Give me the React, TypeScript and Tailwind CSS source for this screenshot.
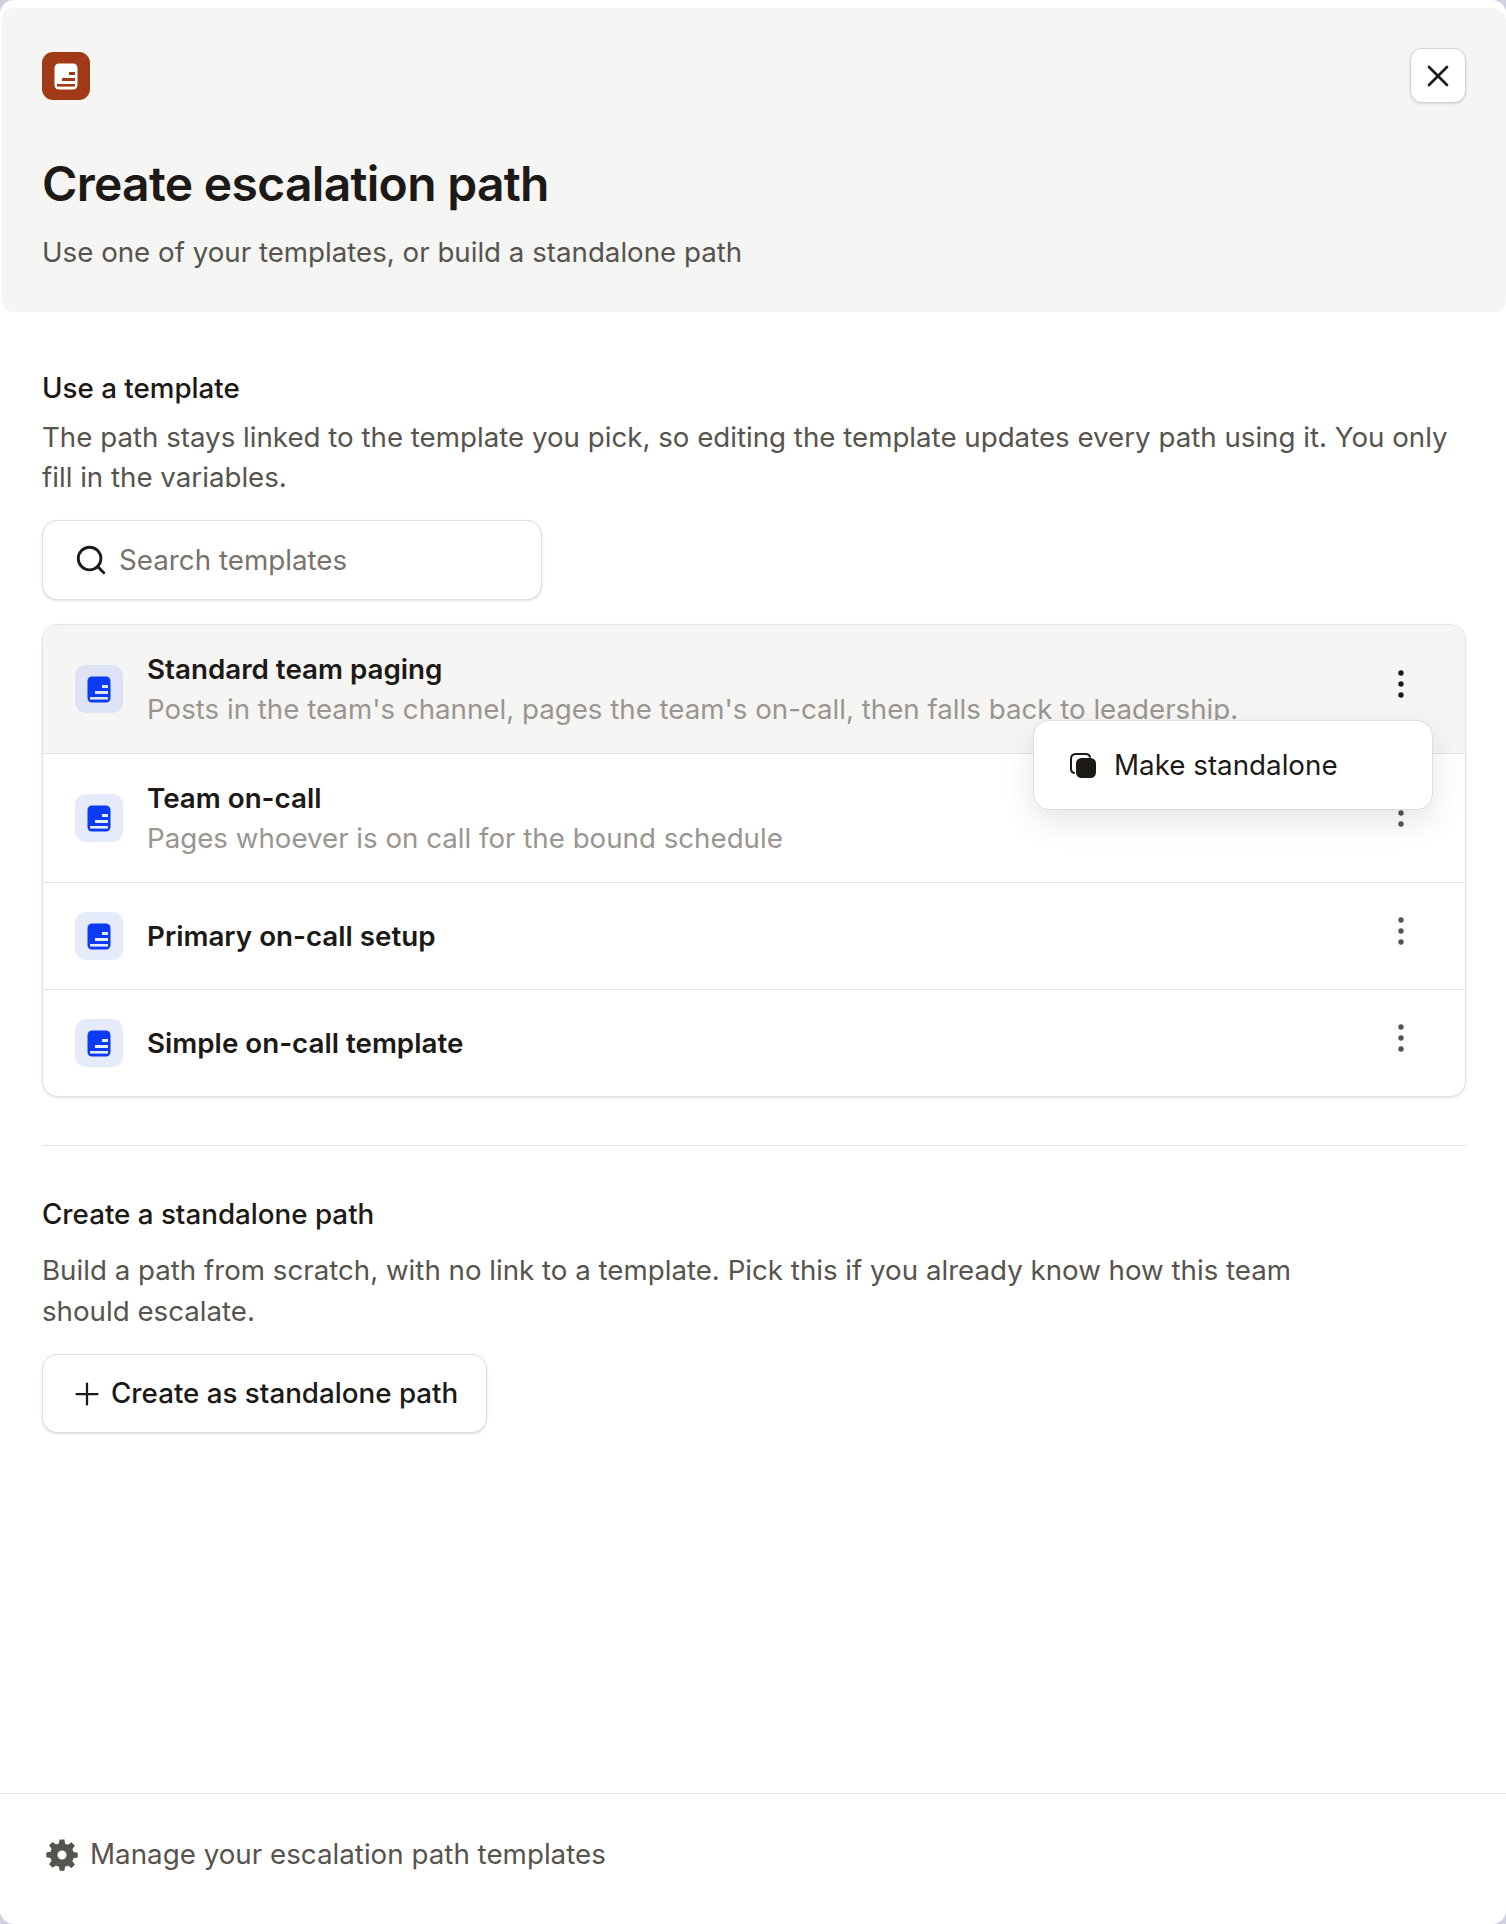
import { Plus, Search, X } from "lucide-react";

const TemplateIcon = ({ fill, cut }: { fill: string; cut: string }) => (
  <svg width="24" height="27" viewBox="0 0 24 27" fill="none">
    <rect x="0.5" y="0.5" width="23" height="26" rx="4.5" fill={fill} />
    <rect x="15" y="9" width="6" height="3" fill={cut} />
    <rect x="8" y="15" width="13" height="3" fill={cut} />
    <rect x="3" y="21" width="18" height="2.6" fill={cut} />
  </svg>
);

const StackIcon = () => (
  <svg width="27" height="26" viewBox="0 0 27 26" fill="none">
    <path d="M4 20C2 19.5 1 18.5 1 16V6C1 3 3 1 6 1H16C18.5 1 19.5 2 20 4" stroke="#1c1917" strokeWidth="2" strokeLinecap="round" />
    <rect x="6" y="5" width="20" height="20" rx="5.5" fill="#1c1917" />
  </svg>
);

const GearIcon = () => (
  <svg width="34" height="34" viewBox="0 0 24 24" fill="#57534e">
    <path
      fillRule="evenodd"
      d="M10.3 1h3.4l.5 3a8 8 0 0 1 2 .8l2.5-1.8 2.4 2.4-1.8 2.5c.4.6.6 1.3.8 2l3 .5v3.4l-3 .5a8 8 0 0 1-.8 2l1.8 2.5-2.4 2.4-2.5-1.8c-.6.4-1.3.6-2 .8l-.5 3h-3.4l-.5-3a8 8 0 0 1-2-.8L5.3 21 2.9 18.6l1.8-2.5a8 8 0 0 1-.8-2l-3-.5v-3.4l3-.5c.2-.7.4-1.4.8-2L2.9 5.200 5.300 2.800l2.500 1.800c.6-.4 1.300-.6 2-.8zM12 8.800a3.200 3.200 0 1 0 0 6.400 3.200 3.200 0 0 0 0-6.400z"
    />
  </svg>
);

const Dots = ({ color }: { color: string }) => (
  <svg width="8" height="30" viewBox="0 0 8 30" fill={color} className="-mt-[10px] shrink-0">
    <circle cx="4" cy="4" r="2.7" />
    <circle cx="4" cy="15" r="2.7" />
    <circle cx="4" cy="26" r="2.7" />
  </svg>
);

const templates = [
  { name: "Standard team paging", desc: "Posts in the team's channel, pages the team's on-call, then falls back to leadership." },
  { name: "Team on-call", desc: "Pages whoever is on call for the bound schedule" },
  { name: "Primary on-call setup" },
  { name: "Simple on-call template" },
];

const TemplateRow = ({ name, desc, index }: { name: string; desc?: string; index: number }) => (
  <div
    className={`flex items-center pl-[32px] pr-[60px] ${index === 0 ? "h-[128px]" : desc ? "h-[129px]" : "h-[107px]"} ${
      index > 0 ? "border-t border-[#e3e3e1]" : ""
    } ${index === 0 ? "bg-[#f5f5f3] rounded-t-[15px]" : ""}`}
  >
    <div
      className={`flex h-[48px] w-[48px] shrink-0 items-center justify-center rounded-[11px] ${
        index === 0 ? "bg-[#dde3f5]" : "bg-[#e6ebfc]"
      }`}
    >
      <TemplateIcon fill="#0b3bf5" cut={index === 0 ? "#dde3f5" : "#e6ebfc"} />
    </div>
    <div className="ml-[24px] min-w-0 flex-1">
      <div className="text-[27.75px] font-semibold leading-[38px] text-[#1c1917]">{name}</div>
      {desc && <div className="mt-[2px] whitespace-nowrap text-[27.7px] leading-[39px] text-[#9a9591]">{desc}</div>}
    </div>
    <Dots color={index === 0 ? "#1c1917" : "#57534e"} />
  </div>
);

export default function App() {
  return (
    <div className="relative h-[1924px] w-[1506px] overflow-hidden bg-[#cfd0e0] font-['Inter',sans-serif]">
      <div className="flex h-full flex-col rounded-[14px] bg-white pt-[8px] pl-[2px]">
        <header className="relative h-[304px] shrink-0 rounded-[10px] rounded-tr-[14px] bg-[#f5f5f3] pl-[40px] pr-[40px] pt-[44px]">
          <div className="flex items-start justify-between">
            <div className="flex h-[48px] w-[48px] items-center justify-center rounded-[11px] bg-[#a03a17]">
              <TemplateIcon fill="#ffffff" cut="#a03a17" />
            </div>
            <button className="-mt-[4px] flex h-[55px] w-[56px] items-center justify-center rounded-[12px] border border-[#d6d3d1] bg-white shadow-sm">
              <X size={36} strokeWidth={1.8} className="text-[#1c1917]" />
            </button>
          </div>
          <h1 className="mt-[47px] text-[48px] font-semibold leading-[68px] tracking-[-0.7px] text-[#1c1917]">
            Create escalation path
          </h1>
          <p className="mt-[15px] text-[27.7px] leading-[39px] text-[#57534e]">
            Use one of your templates, or build a standalone path
          </p>
        </header>

        <main className="flex-1 pl-[40px] pr-[40px]">
          <section className="pt-[58px]">
            <h2 className="text-[27.75px] font-medium leading-[36px] text-[#1c1917]">Use a template</h2>
            <p className="mt-[11px] text-[27.7px] leading-[40px] text-[#57534e]">
              The path stays linked to the template you pick, so editing the template updates every path using it. You only fill in the variables.
            </p>
            <div className="mt-[23px] flex h-[80px] w-[500px] items-center rounded-[15px] border border-[#dedddb] bg-white pl-[31px] shadow-sm">
              <Search size={34} strokeWidth={2} className="text-[#1c1917]" />
              <span className="ml-[11px] pt-[1px] text-[27.75px] text-[#78716c]">Search templates</span>
            </div>
            <div className="relative mt-[24px] rounded-[16px] border border-[#e3e3e1] shadow-sm">
              {templates.map((t, i) => (
                <TemplateRow key={t.name} index={i} name={t.name} desc={t.desc} />
              ))}
              <div className="absolute left-[990px] top-[95px] flex h-[90px] w-[400px] items-center rounded-[16px] border border-[#dedddb] bg-white pl-[36px] pt-[2px] shadow-[0_12px_32px_rgba(0,0,0,0.1)]">
                <StackIcon />
                <span className="ml-[17px] text-[27.75px] text-[#1c1917]">Make standalone</span>
              </div>
            </div>
          </section>

          <hr className="mt-[48px] border-[#e3e3e1]" />

          <section className="pt-[50px]">
            <h2 className="text-[27.75px] font-medium leading-[36px] text-[#1c1917]">Create a standalone path</h2>
            <p className="mt-[18px] max-w-[1300px] text-[27.7px] leading-[41px] text-[#57534e]">
              Build a path from scratch, with no link to a template. Pick this if you already know how this team should escalate.
            </p>
            <button className="mt-[22px] flex h-[79px] items-center rounded-[15px] border border-[#dedddb] bg-white pl-[26px] pr-[28px] shadow-sm">
              <Plus size={36} strokeWidth={1.5} className="text-[#1c1917]" />
              <span className="ml-[6px] pt-[1px] text-[27.75px] font-medium text-[#1c1917]">Create as standalone path</span>
            </button>
          </section>
        </main>

        <footer className="-ml-[2px] flex h-[131px] shrink-0 items-center rounded-b-[14px] border-t border-[#e3e3e1] pb-[8px] pl-[45px]">
          <GearIcon />
          <span className="ml-[11px] text-[27.75px] text-[#57534e]">Manage your escalation path templates</span>
        </footer>
      </div>
    </div>
  );
}
